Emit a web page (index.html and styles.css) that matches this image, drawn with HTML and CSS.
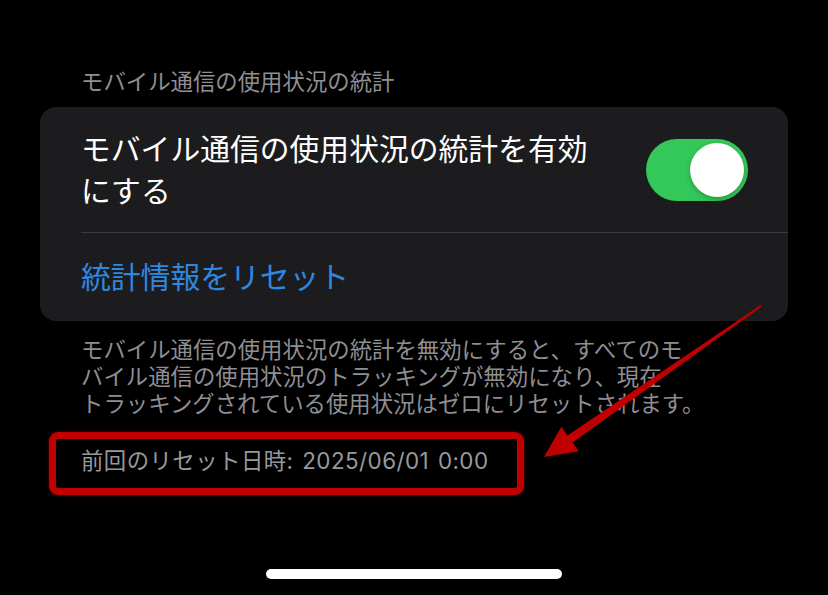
FILE: index.html
```html
<!DOCTYPE html>
<html lang="ja">
<head>
    <meta charset="UTF-8">
    <meta name="viewport" content="width=device-width, initial-scale=1.0">
    <title>モバイル通信</title>
    <link rel="stylesheet" href="styles.css">
</head>
<body>
    <div class="screen">
        <p class="section-title">モバイル通信の使用状況の統計</p>

        <div class="card">
            <div class="row row-toggle">
                <span class="row-label">モバイル通信の使用状況の統計を有効にする</span>
                <span class="switch on"><span class="knob"></span></span>
            </div>
            <div class="row row-link">
                <span class="link">統計情報をリセット</span>
            </div>
        </div>

        <p class="section-footer">
            モバイル通信の使用状況の統計を無効にすると、すべてのモ<br>
            バイル通信の使用状況のトラッキングが無効になり、現在<br>
            トラッキングされている使用状況はゼロにリセットされます。
        </p>

        <p class="last-reset">前回のリセット日時: 2025/06/01 0:00</p>
    </div>

    <!-- annotation arrow -->
    <svg class="arrow" width="828" height="595" viewBox="0 0 828 595">
        <polygon points="761.6,306.8 572.6,442.6 578.6,451.3 544,457 561.4,426.7 567.4,435.4 760.4,305.2" />
    </svg>

    <div class="home-bar"></div>
</body>
</html>
```

FILE: styles.css
```css
body {
    margin: 0;
    padding: 0;
    background-color: #000;
    font-family: "Inter", "Noto Sans CJK JP", sans-serif;
    width: 828px;
    height: 595px;
    overflow: hidden;
    position: relative;
}
.screen {
    padding: 68px 40px 0;
}
.section-title {
    margin: 0 0 12px;
    padding-left: 41px;
    font-size: 22.4px;
    line-height: 27px;
    color: #8e8e93;
}
.card {
    background: #1c1c1e;
    border-radius: 16px;
    overflow: hidden;
}
.row {
    display: flex;
    align-items: center;
    justify-content: space-between;
    padding: 0 40px 0 41px;
}
.row-toggle {
    height: 125px;
}
.row-label {
    max-width: 520px;
    font-size: 29.8px;
    line-height: 42px;
    color: #fff;
}
.row-link {
    height: 88px;
    margin-left: 41px;
    padding-left: 0;
    border-top: 1px solid #3a3a3c;
}
.link {
    font-size: 29.8px;
    line-height: 42px;
    color: #2f88e0;
}
.switch {
    position: relative;
    flex: none;
    width: 102px;
    height: 62px;
    border-radius: 31px;
    background: #39393d;
}
.switch.on {
    background: #34c759;
}
.knob {
    position: absolute;
    top: 4px;
    right: 4px;
    width: 54px;
    height: 54px;
    border-radius: 50%;
    background: #fff;
    box-shadow: 0 2px 5px rgba(0, 0, 0, 0.25);
}
.section-footer {
    margin: 15px 0 0;
    padding-left: 41px;
    font-size: 22.4px;
    line-height: 27px;
    color: #8e8e93;
}
.last-reset {
    box-sizing: border-box;
    width: 475px;
    height: 63px;
    margin: 15px 0 0 9px;
    padding: 8px 0 0 25px;
    border: 7px solid #c00000;
    border-radius: 9px;
    box-shadow: 0 0 3px rgba(200, 0, 0, 0.6);
    font-size: 22.4px;
    line-height: 27px;
    letter-spacing: 0.45px;
    word-spacing: 2px;
    color: #98989d;
}
.arrow {
    position: absolute;
    top: 0;
    left: 0;
    pointer-events: none;
}
.arrow polygon {
    fill: #c00000;
}
.home-bar {
    position: absolute;
    left: 266px;
    bottom: 16px;
    width: 296px;
    height: 10px;
    border-radius: 5px;
    background: #fff;
}
```
